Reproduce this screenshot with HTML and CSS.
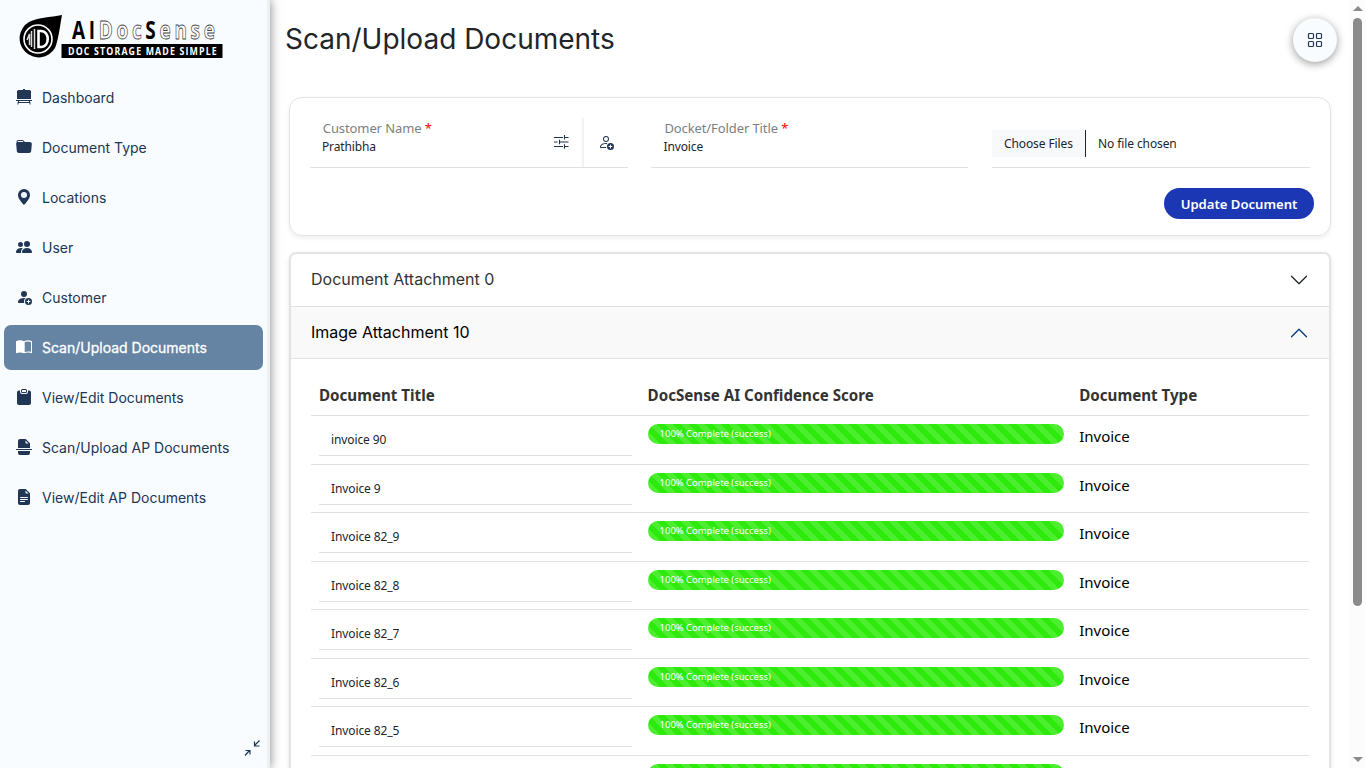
FILE: index.html
```html
<!DOCTYPE html>
<html lang="en">
<head>
<meta charset="utf-8">
<title>Scan/Upload Documents</title>
<link rel="stylesheet" href="styles.css">
</head>
<body>
<aside class="sidebar">
  <svg class="logo" width="206" height="50" viewBox="0 -4 206 50">
    <path d="M43 1C32 3 17 4 10 8A19 19 0 1 0 36 34C39 28 41 12 43 1Z" fill="#000"/>
    <circle cx="19" cy="25" r="14" fill="#000" stroke="#fff" stroke-width="1.6"/>
    <path d="M8 26 10.500 20V31M12.500 17V33M15.500 15V35" stroke="#ddd" stroke-width="1.500" fill="none"/>
    <path d="M19.500 17V33H22C31 33 31 17 22 17Z" stroke="#fff" stroke-width="2.600" fill="none"/>
    <g transform="translate(53 25) scale(.76 1)"><text class="logo-name" textLength="188"><tspan>AI</tspan><tspan class="outline">Doc</tspan><tspan>S</tspan><tspan class="outline">ense</tspan></text></g>
    <rect x="42.500" y="30" width="161" height="14" fill="#000"/>
    <g transform="translate(49 41) scale(.8 1)"><text class="logo-tag" textLength="186">DOC STORAGE MADE SIMPLE</text></g>
  </svg>
  <nav class="nav">
    <a class="item"><svg class="ico" viewBox="0 0 16 16"><path d="M7 0h2v1h4.500A1.500 1.500 0 0 1 15 2.500V10H1V2.500A1.500 1.500 0 0 1 2.500 1H7zM0 11h16v1h-2l.7 3.500h-1L13.400 14H2.600l-.3 1.500h-1L2 12H0zm3.200 1-.2 1h10l-.2-1z"/></svg>Dashboard</a>
    <a class="item"><svg class="ico" viewBox="0 0 16 16"><path d="M9.828 3h3.982a2 2 0 0 1 1.992 2.181l-.637 7A2 2 0 0 1 13.174 14H2.825a2 2 0 0 1-1.991-1.819l-.637-7a2 2 0 0 1 .342-1.310L.5 3a2 2 0 0 1 2-2h3.672a2 2 0 0 1 1.414.586l.828.828A2 2 0 0 0 9.828 3m-8.322.120q.322-.119.684-.120h5.396l-.707-.707A1 1 0 0 0 6.172 2H2.500a1 1 0 0 0-1 .981z"/></svg>Document Type</a>
    <a class="item"><svg class="ico" viewBox="0 0 16 16"><path d="M8 16s6-5.686 6-10A6 6 0 0 0 2 6c0 4.314 6 10 6 10m0-7a3 3 0 1 1 0-6 3 3 0 0 1 0 6"/></svg>Locations</a>
    <a class="item"><svg class="ico" viewBox="0 0 16 16"><path d="M7 14s-1 0-1-1 1-4 5-4 5 3 5 4-1 1-1 1zm4-6a3 3 0 1 0 0-6 3 3 0 0 0 0 6m-5.784 6A2.240 2.240 0 0 1 5 13c0-1.355.68-2.750 1.936-3.720A6.300 6.300 0 0 0 5 9c-4 0-5 3-5 4s1 1 1 1zM4.500 8a2.500 2.500 0 1 0 0-5 2.500 2.500 0 0 0 0 5"/></svg>User</a>
    <a class="item"><svg class="ico" viewBox="0 0 16 16"><path d="M12.500 16a3.500 3.500 0 1 0 0-7 3.500 3.500 0 0 0 0 7m.5-5v1h1a.5.5 0 0 1 0 1h-1v1a.5.5 0 0 1-1 0v-1h-1a.5.5 0 0 1 0-1h1v-1a.5.5 0 0 1 1 0m-2-6a3 3 0 1 1-6 0 3 3 0 0 1 6 0"/><path d="M2 13c0 1 1 1 1 1h5.256A4.500 4.500 0 0 1 8 12.500a4.500 4.500 0 0 1 1.544-3.393Q8.844 9.002 8 9c-5 0-6 3-6 4"/></svg>Customer</a>
    <a class="item active"><svg class="ico" viewBox="0 0 16 16"><path fill-rule="evenodd" d="M0 2.300C2.500 1 5.500 1 8 2.300 10.500 1 13.500 1 16 2.300V14.300C13.500 13.100 10.500 13.100 8 14.300 5.500 13.100 2.500 13.100 0 14.300zM8.700 2.900V13C10.700 12.300 13 12.300 15 12.800V2.900C13 2.200 10.700 2.200 8.700 2.900z"/></svg>Scan/Upload Documents</a>
    <a class="item"><svg class="ico" viewBox="0 0 16 16"><path fill-rule="evenodd" d="M10 1.500a.5.5 0 0 0-.5-.5h-3a.5.500 0 0 0-.5.5v1a.5.500 0 0 0 .5.5h3a.5.500 0 0 0 .5-.5zm-5 0A1.500 1.500 0 0 1 6.500 0h3A1.500 1.500 0 0 1 11 1.500v1A1.500 1.500 0 0 1 9.500 4h-3A1.500 1.500 0 0 1 5 2.500zm-1 0H3a2 2 0 0 0-2 2V14a2 2 0 0 0 2 2h10a2 2 0 0 0 2-2V3.500a2 2 0 0 0-2-2h-1v1A2.500 2.500 0 0 1 9.500 5h-3A2.500 2.500 0 0 1 4 2.500z"/></svg>View/Edit Documents</a>
    <a class="item"><svg class="ico" viewBox="0 0 16 16"><path d="M2 9V2a2 2 0 0 1 2-2h5.293A1 1 0 0 1 10 .293L13.707 4a1 1 0 0 1 .293.707V9zm7.500-7.500v2a1 1 0 0 0 1 1h2zM0 10h16v1H0zM2 12h12v2a2 2 0 0 1-2 2H4a2 2 0 0 1-2-2z"/></svg>Scan/Upload AP Documents</a>
    <a class="item"><svg class="ico" viewBox="0 0 16 16"><path d="M9.293 0H4a2 2 0 0 0-2 2v12a2 2 0 0 0 2 2h8a2 2 0 0 0 2-2V4.707A1 1 0 0 0 13.707 4L10 .293A1 1 0 0 0 9.293 0M9.500 3.500v-2l3 3h-2a1 1 0 0 1-1-1M4.500 9a.5.5 0 0 1 0-1h7a.5.5 0 0 1 0 1zM4 10.500a.5.500 0 0 1 .5-.5h7a.5.500 0 0 1 0 1h-7a.5.500 0 0 1-.5-.5m.5 2.500a.5.500 0 0 1 0-1h4a.5.500 0 0 1 0 1z"/></svg>View/Edit AP Documents</a>
  </nav>
  <svg class="collapse" width="18" height="18" viewBox="0 0 18 18" fill="none" stroke="#213555" stroke-width="1.200"><path d="M16.500 1.500 11.500 6.500M11.500 2.500v4.500h5M2 16.500l4.500-5M2.500 11.500h4.500v4"/></svg>
</aside>

<main class="main">
  <header class="head">
    <h1 class="title">Scan/Upload Documents</h1>
    <button class="apps"><svg width="16" height="16" viewBox="0 0 16 16" fill="none" stroke="#213555" stroke-width="1.200"><rect x="1.500" y="1.500" width="5" height="5" rx="1"/><rect x="9.500" y="1.500" width="5" height="5" rx="1"/><rect x="1.500" y="9.500" width="5" height="5" rx="1"/><rect x="9.500" y="9.500" width="5" height="5" rx="1"/></svg></button>
  </header>

  <section class="card">
    <div class="fields">
      <div class="field customer">
        <div class="text"><label>Customer Name <b>*</b></label><span class="value">Prathibha</span></div>
        <div class="tool"><svg width="16" height="16" viewBox="0 0 16 16" fill="none" stroke="#213555" stroke-width="1.100"><path d="M1 3.500h9M12 3.500h3.500M11.500 1v4.500M1 8h3.500M6.500 8h9M6.500 5.800v4.500M1 12.500h9M12 12.500h3.500M11.500 10.300v4.500"/></svg></div>
        <div class="tool add"><svg width="16" height="16" viewBox="0 0 16 16" fill="#213555"><path d="M8 8a3 3 0 1 0 0-6 3 3 0 0 0 0 6m2-3a2 2 0 1 1-4 0 2 2 0 0 1 4 0M8.256 14a4.500 4.500 0 0 1-.229-1H3.004c.001-.246.154-.986.832-1.664C4.488 10.684 5.711 10 8 10q.39 0 .740.025c.226-.341.496-.650.804-.918Q8.844 9.002 8 9c-5 0-6 3-6 4s1 1 1 1z"/><path d="M12.500 16a3.500 3.500 0 1 0 0-7 3.500 3.500 0 0 0 0 7m.5-5v1h1a.5.500 0 0 1 0 1h-1v1a.5.500 0 0 1-1 0v-1h-1a.5.500 0 0 1 0-1h1v-1a.5.500 0 0 1 1 0"/></svg></div>
      </div>
      <div class="field docket">
        <div class="text"><label>Docket/Folder Title <b>*</b></label><span class="value">Invoice</span></div>
      </div>
      <div class="field file"><span class="choose">Choose Files</span><span class="none">No file chosen</span></div>
    </div>
    <button class="update">Update Document</button>
  </section>

  <section class="accordion">
    <div class="acc-head">Document Attachment 0<svg width="20" height="20" viewBox="0 0 16 16" fill="none" stroke="#212529" stroke-linecap="round" stroke-linejoin="round"><path d="m2 5 6 6 6-6"/></svg></div>
    <div class="acc-head open">Image Attachment 10<svg width="20" height="20" viewBox="0 0 16 16" fill="none" stroke="#0a3678" stroke-linecap="round" stroke-linejoin="round"><path d="m2 11 6-6 6 6"/></svg></div>
    <div class="table">
      <div class="row th"><div>Document Title</div><div>DocSense AI Confidence Score</div><div>Document Type</div></div>
      <div class="row"><div class="name">invoice 90</div><div class="bar">100% Complete (success)</div><div class="type">Invoice</div></div>
      <div class="row"><div class="name">Invoice 9</div><div class="bar">100% Complete (success)</div><div class="type">Invoice</div></div>
      <div class="row"><div class="name">Invoice 82_9</div><div class="bar">100% Complete (success)</div><div class="type">Invoice</div></div>
      <div class="row"><div class="name">Invoice 82_8</div><div class="bar">100% Complete (success)</div><div class="type">Invoice</div></div>
      <div class="row"><div class="name">Invoice 82_7</div><div class="bar">100% Complete (success)</div><div class="type">Invoice</div></div>
      <div class="row"><div class="name">Invoice 82_6</div><div class="bar">100% Complete (success)</div><div class="type">Invoice</div></div>
      <div class="row"><div class="name">Invoice 82_5</div><div class="bar">100% Complete (success)</div><div class="type">Invoice</div></div>
      <div class="row"><div class="name"></div><div class="bar"></div><div class="type"></div></div>
    </div>
  </section>
</main>

<div class="scroll"><i class="up"></i><i class="thumb"></i><i class="down"></i></div>
</body>
</html>
```
FILE: styles.css
```css
* { box-sizing: border-box; }
body {
  margin: 0;
  height: 768px;
  display: flex;
  overflow: hidden;
  background: #fff;
  color: #212529;
  font-family: "Noto Sans", sans-serif;
}
button { border: 0; padding: 0; font-family: inherit; }

.sidebar {
  width: 270px;
  flex: none;
  display: flex;
  flex-direction: column;
  background: #f8fcff;
  border-right: 3px solid #f0f0f0;
  box-shadow: 0 0 10px rgba(0, 0, 0, .5);
  padding: 10px 4px 11px;
  z-index: 1;
}
.logo { margin-left: 15px; flex: none; }
.logo-name { font: 700 25px "Open Sans", sans-serif; fill: #000; }
.logo-name .outline { fill: #fff; stroke: #444; stroke-width: .8px; }
.logo-tag { font: 700 11px "Open Sans", sans-serif; fill: #fff; }
.nav { display: flex; flex-direction: column; gap: 5px; margin-top: 15px; }
.item {
  height: 45px;
  width: 259px;
  display: flex;
  align-items: center;
  gap: 10px;
  padding: 0 12px 1px;
  border-radius: 7px;
  font: 400 14px Inter, sans-serif;
  color: #213555;
}
.ico { width: 16px; height: 16px; fill: currentColor; margin-top: -1px; }
.item.active { background: #6583a3; color: #fff; -webkit-text-stroke: .3px #fff; }
.collapse { margin: auto 0 0 239px; flex: none; }

.main { width: 1080px; height: 768px; overflow: hidden; flex: none; padding: 0 19px; }
.head { height: 97px; display: flex; justify-content: space-between; align-items: flex-start; }
.title { margin: 22px 0 0 -4px; font: 400 28px/34px Inter, sans-serif; }
.apps {
  width: 44px;
  height: 44px;
  margin: 18px -6px 0 0;
  border-radius: 50%;
  background: #f8fcff;
  box-shadow: 0 2px 8px rgba(0, 0, 0, .4);
  display: grid;
  place-items: center;
}

.card {
  height: 139px;
  border: 1px solid #e2e3e5;
  border-radius: 13px;
  box-shadow: 0 2px 4px rgba(0, 0, 0, .075);
  padding: 20px 16px 0 20px;
  display: flex;
  flex-direction: column;
}
.fields { display: grid; grid-template-columns: 318px 317px 318px; column-gap: 23.500px; }
.field { height: 50px; border-bottom: 1px solid #dee2e6; display: flex; }
.docket { margin-left: -.5px; margin-right: .5px; }
.text { flex: 1; padding-left: 12px; display: flex; flex-direction: column; }
.docket .text { padding-left: 12.600px; }
.text label { font-size: 13px; line-height: 20px; margin-left: .8px; letter-spacing: -.1px; color: #7c7f82; }
.text label b { color: red; font-weight: 400; }
.value { font-size: 12px; line-height: 17px; letter-spacing: -.15px; }
.tool { width: 42px; display: grid; place-items: center; padding-bottom: 1px; }
.tool.add { width: 46px; border-left: 2px solid #f2f2f3; }
.file { align-items: flex-start; padding-top: 12px; font-size: 12px; line-height: 27px; letter-spacing: -.1px; }
.choose { width: 94px; padding-left: 12px; background: #f8f9fa; border-right: 1px solid #212529; }
.none { padding-left: 12px; }
.update {
  align-self: flex-end;
  width: 150px;
  height: 31px;
  margin-top: 20px;
  border-radius: 16px;
  background: #1c37b3;
  color: #fff;
  font-size: 13.100px;
  font-weight: 600;
}

.accordion {
  height: 560px;
  margin-top: 16px;
  border: 2px solid #e2e3e5;
  border-radius: 7px;
  box-shadow: 0 2px 5px rgba(0, 0, 0, .1);
}
.acc-head {
  height: 53px;
  padding: 0 20px 2px 20px;
  border-bottom: 1px solid #dee2e6;
  display: flex;
  align-items: center;
  justify-content: space-between;
  font: 400 16px Inter, sans-serif;
  color: #333;
}
.acc-head svg { margin-top: 2px; }
.acc-head.open { height: 52px; padding-bottom: 1px; background: #f9f9f9; color: #000; }
.table { padding: 16px 20px 0 20px; }
.row {
  height: 48.500px;
  display: grid;
  grid-template-columns: 328.600px 431.600px 1fr;
  align-items: start;
  border-bottom: 1px solid #dee2e6;
  padding: 8px 8px 0;
}
.row.th { height: 41px; font-size: 15.150px; line-height: 25px; font-weight: 700; color: #333; }
.name { width: 313px; height: 32px; border-bottom: 1px solid #dee2e6; padding-left: 12px; font-size: 12px; line-height: 31px; letter-spacing: -.1px; }
.bar {
  width: 416px;
  height: 20px;
  border-radius: 10px;
  background: linear-gradient(45deg, rgba(255,255,255,.15) 25%, transparent 25%, transparent 50%, rgba(255,255,255,.15) 50%, rgba(255,255,255,.15) 75%, transparent 75%) 0 0 / 16px 16px #2eea0c;
  color: #fff;
  font-size: 9.450px;
  line-height: 19px;
  padding-left: 12px;
}
.type { font-size: 15px; line-height: 25px; color: #000; }

.scroll { width: 16px; background: #fcfcfc; display: flex; flex-direction: column; align-items: center; padding: 6px 1px 6px 0; }
.up, .down { border: 5px solid transparent; border-top: 0; border-bottom: 5px solid #8b8b8b; }
.down { border-bottom: 0; border-top: 5px solid #8b8b8b; margin-top: auto; }
.thumb { width: 9px; height: 588px; margin-top: 7px; border-radius: 5px; background: #8b8b8b; }
```
